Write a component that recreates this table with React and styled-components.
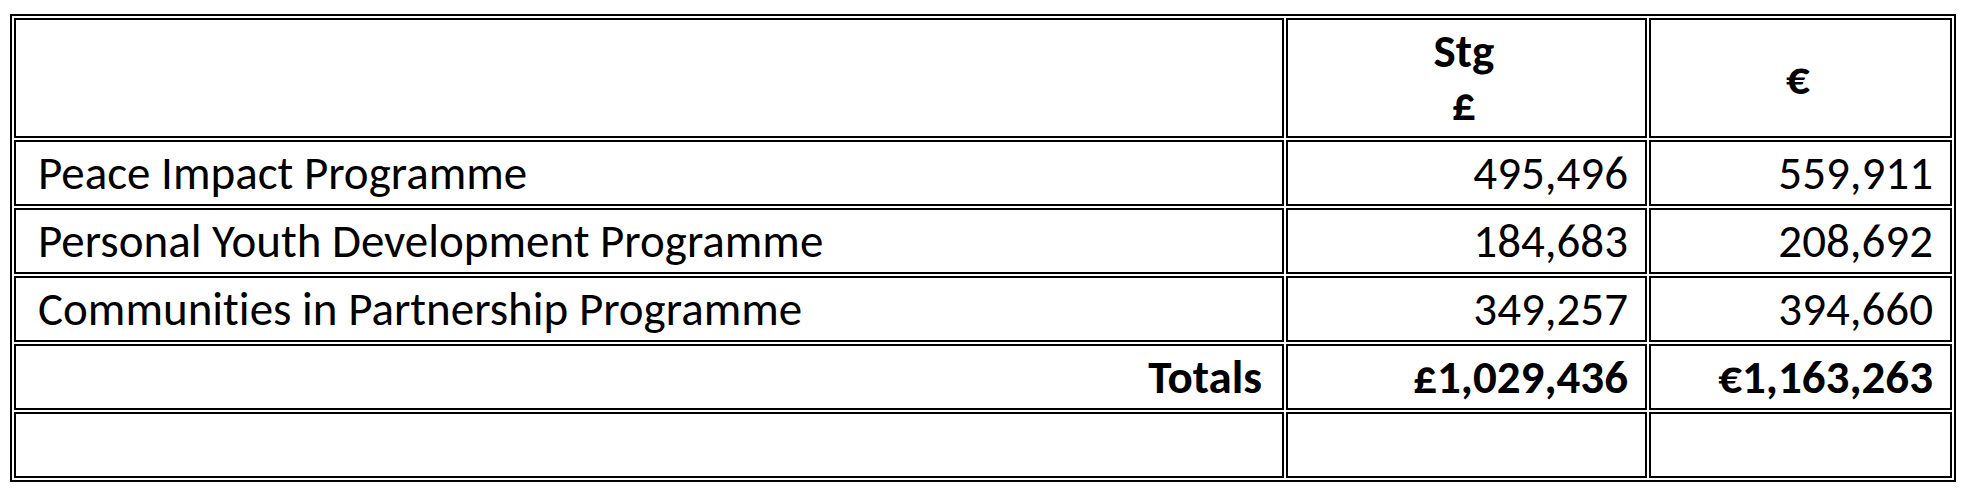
import React from 'react';
import styled, { createGlobalStyle } from 'styled-components';

const GlobalStyle = createGlobalStyle`
  html, body {
    margin: 0;
    padding: 0;
    background: #fff;
  }
  body {
    font-family: Carlito, Calibri, 'Open Sans', 'Noto Sans', sans-serif;
    font-variant-ligatures: none;
    color: #000;
  }
`;

const Page = styled.div`
  padding: 14px 0 0 10px;
`;

const Table = styled.table`
  width: 1946px;
  table-layout: fixed;
  border-collapse: separate;
  border-spacing: 2px;
  border: 2px solid #000;
`;

const Cell = styled.td`
  box-sizing: border-box;
  height: ${(p) => (p.$tall ? '120px' : '66px')};
  border: 2px solid #000;
  padding: 0 ${(p) => (p.$left ? '20px' : '17px')} 0 ${(p) => (p.$left ? '22px' : '12px')};
  font-size: 47px;
  line-height: ${(p) => (p.$tall ? 1.12 : 1.2)};
  font-weight: ${(p) => (p.$bold ? 700 : 400)};
  text-align: ${(p) => p.$align || 'right'};
  vertical-align: middle;
  white-space: nowrap;
`;

const rows = [
  { name: 'Peace Impact Programme', stg: '495,496', eur: '559,911' },
  { name: 'Personal Youth Development Programme', stg: '184,683', eur: '208,692' },
  { name: 'Communities in Partnership Programme', stg: '349,257', eur: '394,660' },
];

export default function App() {
  return (
    <>
      <GlobalStyle />
      <Page>
        <Table>
          <colgroup>
            <col style={{ width: 1270 }} />
            <col style={{ width: 361 }} />
            <col style={{ width: 303 }} />
          </colgroup>
          <tbody>
            <tr>
              <Cell $tall />
              <Cell $tall $bold $align="center">
                Stg
                <br />£
              </Cell>
              <Cell $tall $bold $align="center">€</Cell>
            </tr>
            {rows.map((r) => (
              <tr key={r.name}>
                <Cell $left $align="left">{r.name}</Cell>
                <Cell>{r.stg}</Cell>
                <Cell>{r.eur}</Cell>
              </tr>
            ))}
            <tr>
              <Cell $left $bold>Totals</Cell>
              <Cell $bold>£1,029,436</Cell>
              <Cell $bold>€1,163,263</Cell>
            </tr>
            <tr>
              <Cell $left />
              <Cell />
              <Cell />
            </tr>
          </tbody>
        </Table>
      </Page>
    </>
  );
}
